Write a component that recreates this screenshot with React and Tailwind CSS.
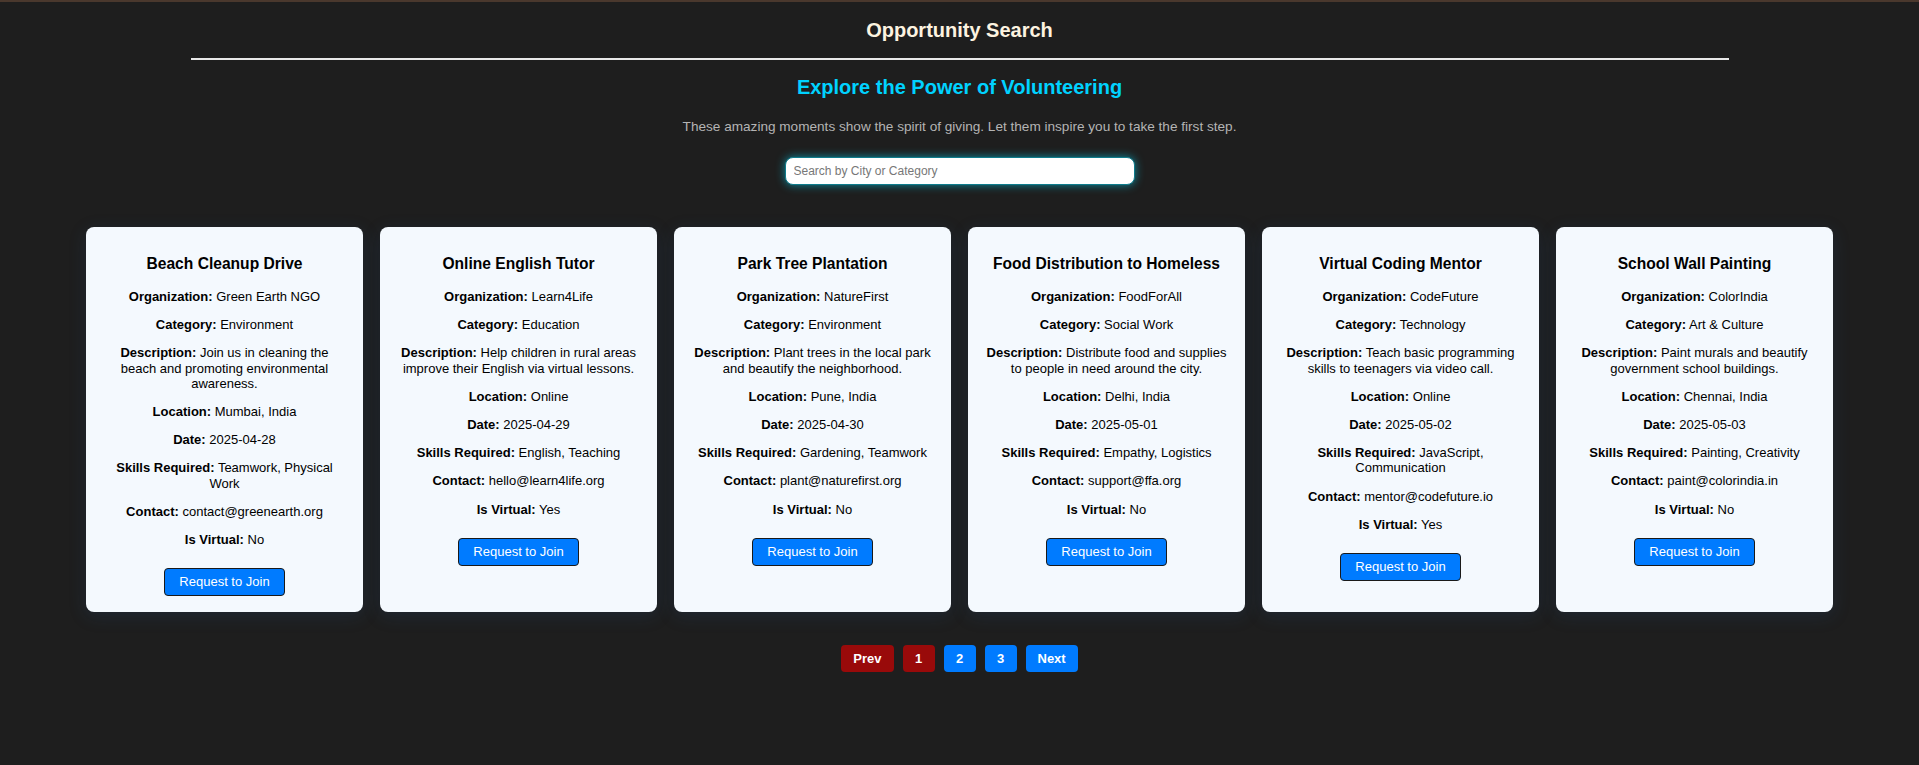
import React, { useState } from 'react';

const opportunities = [
  {
    title: 'Beach Cleanup Drive',
    organization: 'Green Earth NGO',
    category: 'Environment',
    description: 'Join us in cleaning the beach and promoting environmental awareness.',
    location: 'Mumbai, India',
    date: '2025-04-28',
    skills: 'Teamwork, Physical Work',
    contact: 'contact@greenearth.org',
    isVirtual: 'No'
  },
  {
    title: 'Online English Tutor',
    organization: 'Learn4Life',
    category: 'Education',
    description: 'Help children in rural areas improve their English via virtual lessons.',
    location: 'Online',
    date: '2025-04-29',
    skills: 'English, Teaching',
    contact: 'hello@learn4life.org',
    isVirtual: 'Yes'
  },
  {
    title: 'Park Tree Plantation',
    organization: 'NatureFirst',
    category: 'Environment',
    description: 'Plant trees in the local park and beautify the neighborhood.',
    location: 'Pune, India',
    date: '2025-04-30',
    skills: 'Gardening, Teamwork',
    contact: 'plant@naturefirst.org',
    isVirtual: 'No'
  },
  {
    title: 'Food Distribution to Homeless',
    organization: 'FoodForAll',
    category: 'Social Work',
    description: 'Distribute food and supplies to people in need around the city.',
    location: 'Delhi, India',
    date: '2025-05-01',
    skills: 'Empathy, Logistics',
    contact: 'support@ffa.org',
    isVirtual: 'No'
  },
  {
    title: 'Virtual Coding Mentor',
    organization: 'CodeFuture',
    category: 'Technology',
    description: 'Teach basic programming skills to teenagers via video call.',
    location: 'Online',
    date: '2025-05-02',
    skills: 'JavaScript, Communication',
    contact: 'mentor@codefuture.io',
    isVirtual: 'Yes'
  },
  {
    title: 'School Wall Painting',
    organization: 'ColorIndia',
    category: 'Art & Culture',
    description: 'Paint murals and beautify government school buildings.',
    location: 'Chennai, India',
    date: '2025-05-03',
    skills: 'Painting, Creativity',
    contact: 'paint@colorindia.in',
    isVirtual: 'No'
  }
];

function Field({ label, value }) {
  return (
    <p className="my-[13px] leading-[15.2px]">
      <strong className="font-bold">{label}:</strong> {value}
    </p>
  );
}

function OpportunityCard({ item }) {
  return (
    <div className="w-[277px] rounded-[8px] bg-[#f4f9fe] px-[16px] pt-[16px] pb-[16px] text-center text-[13px] text-black shadow-[0_4px_18px_rgba(40,90,150,0.18)]">
      <h3 className="mt-[12px] mb-[16px] text-[15.6px] font-bold leading-[18px]">{item.title}</h3>
      <Field label="Organization" value={item.organization} />
      <Field label="Category" value={item.category} />
      <Field label="Description" value={item.description} />
      <Field label="Location" value={item.location} />
      <Field label="Date" value={item.date} />
      <Field label="Skills Required" value={item.skills} />
      <Field label="Contact" value={item.contact} />
      <Field label="Is Virtual" value={item.isVirtual} />
      <button
        type="button"
        className="mx-auto mt-[21px] block h-[28px] rounded-[4px] border border-[#1a1a1a] bg-[#007bff] px-[14px] text-[13px] text-white hover:bg-[#0069d9]"
      >
        Request to Join
      </button>
    </div>
  );
}

export default function App() {
  const [query, setQuery] = useState('');
  const [page, setPage] = useState(1);

  return (
    <div className="min-h-[765px] border-t-2 border-[#4a382d] bg-[#1e1e1e] font-['Liberation_Sans',Arial,sans-serif]">
      <h1 className="pt-[17px] text-center text-[20px] font-bold leading-[23px] text-[#fdf3e0]">
        Opportunity Search
      </h1>
      <hr className="mx-auto mt-[16px] w-[1538px] border-t-2 border-[#e8e8e8]" />

      <h2 className="mt-[16px] text-center text-[20px] font-bold leading-[23px] text-[#00d2ff]">
        Explore the Power of Volunteering
      </h2>
      <p className="mt-[20px] text-center text-[13.6px] leading-[16px] text-[#b4b4b4]">
        These amazing moments show the spirit of giving. Let them inspire you to take the first step.
      </p>

      <div className="mt-[22px] flex justify-center">
        <input
          type="text"
          value={query}
          onChange={(e) => setQuery(e.target.value)}
          placeholder="Search by City or Category"
          className="h-[28px] w-[350px] rounded-[8px] border border-[#0e7c8c] bg-white px-[8px] text-[12px] text-black shadow-[0_0_10px_rgba(0,200,230,0.65)] outline-none placeholder:text-[#777]"
        />
      </div>

      <div className="mt-[42px] flex items-stretch justify-center gap-[17px]">
        {opportunities.map((item) => (
          <OpportunityCard key={item.title} item={item} />
        ))}
      </div>

      <div className="mt-[33px] flex justify-center gap-[9px] text-[13px] font-bold text-white">
        <button type="button" className="h-[27px] rounded-[4px] bg-[#990a0a] px-[12px]">
          Prev
        </button>
        {[1, 2, 3].map((n) => (
          <button
            key={n}
            type="button"
            onClick={() => setPage(n)}
            className={
              n === page
                ? 'h-[27px] w-[32px] rounded-[4px] bg-[#990a0a]'
                : 'h-[27px] w-[32px] rounded-[4px] bg-[#007bff]'
            }
          >
            {n}
          </button>
        ))}
        <button type="button" className="h-[27px] rounded-[4px] bg-[#007bff] px-[12px]">
          Next
        </button>
      </div>
    </div>
  );
}
